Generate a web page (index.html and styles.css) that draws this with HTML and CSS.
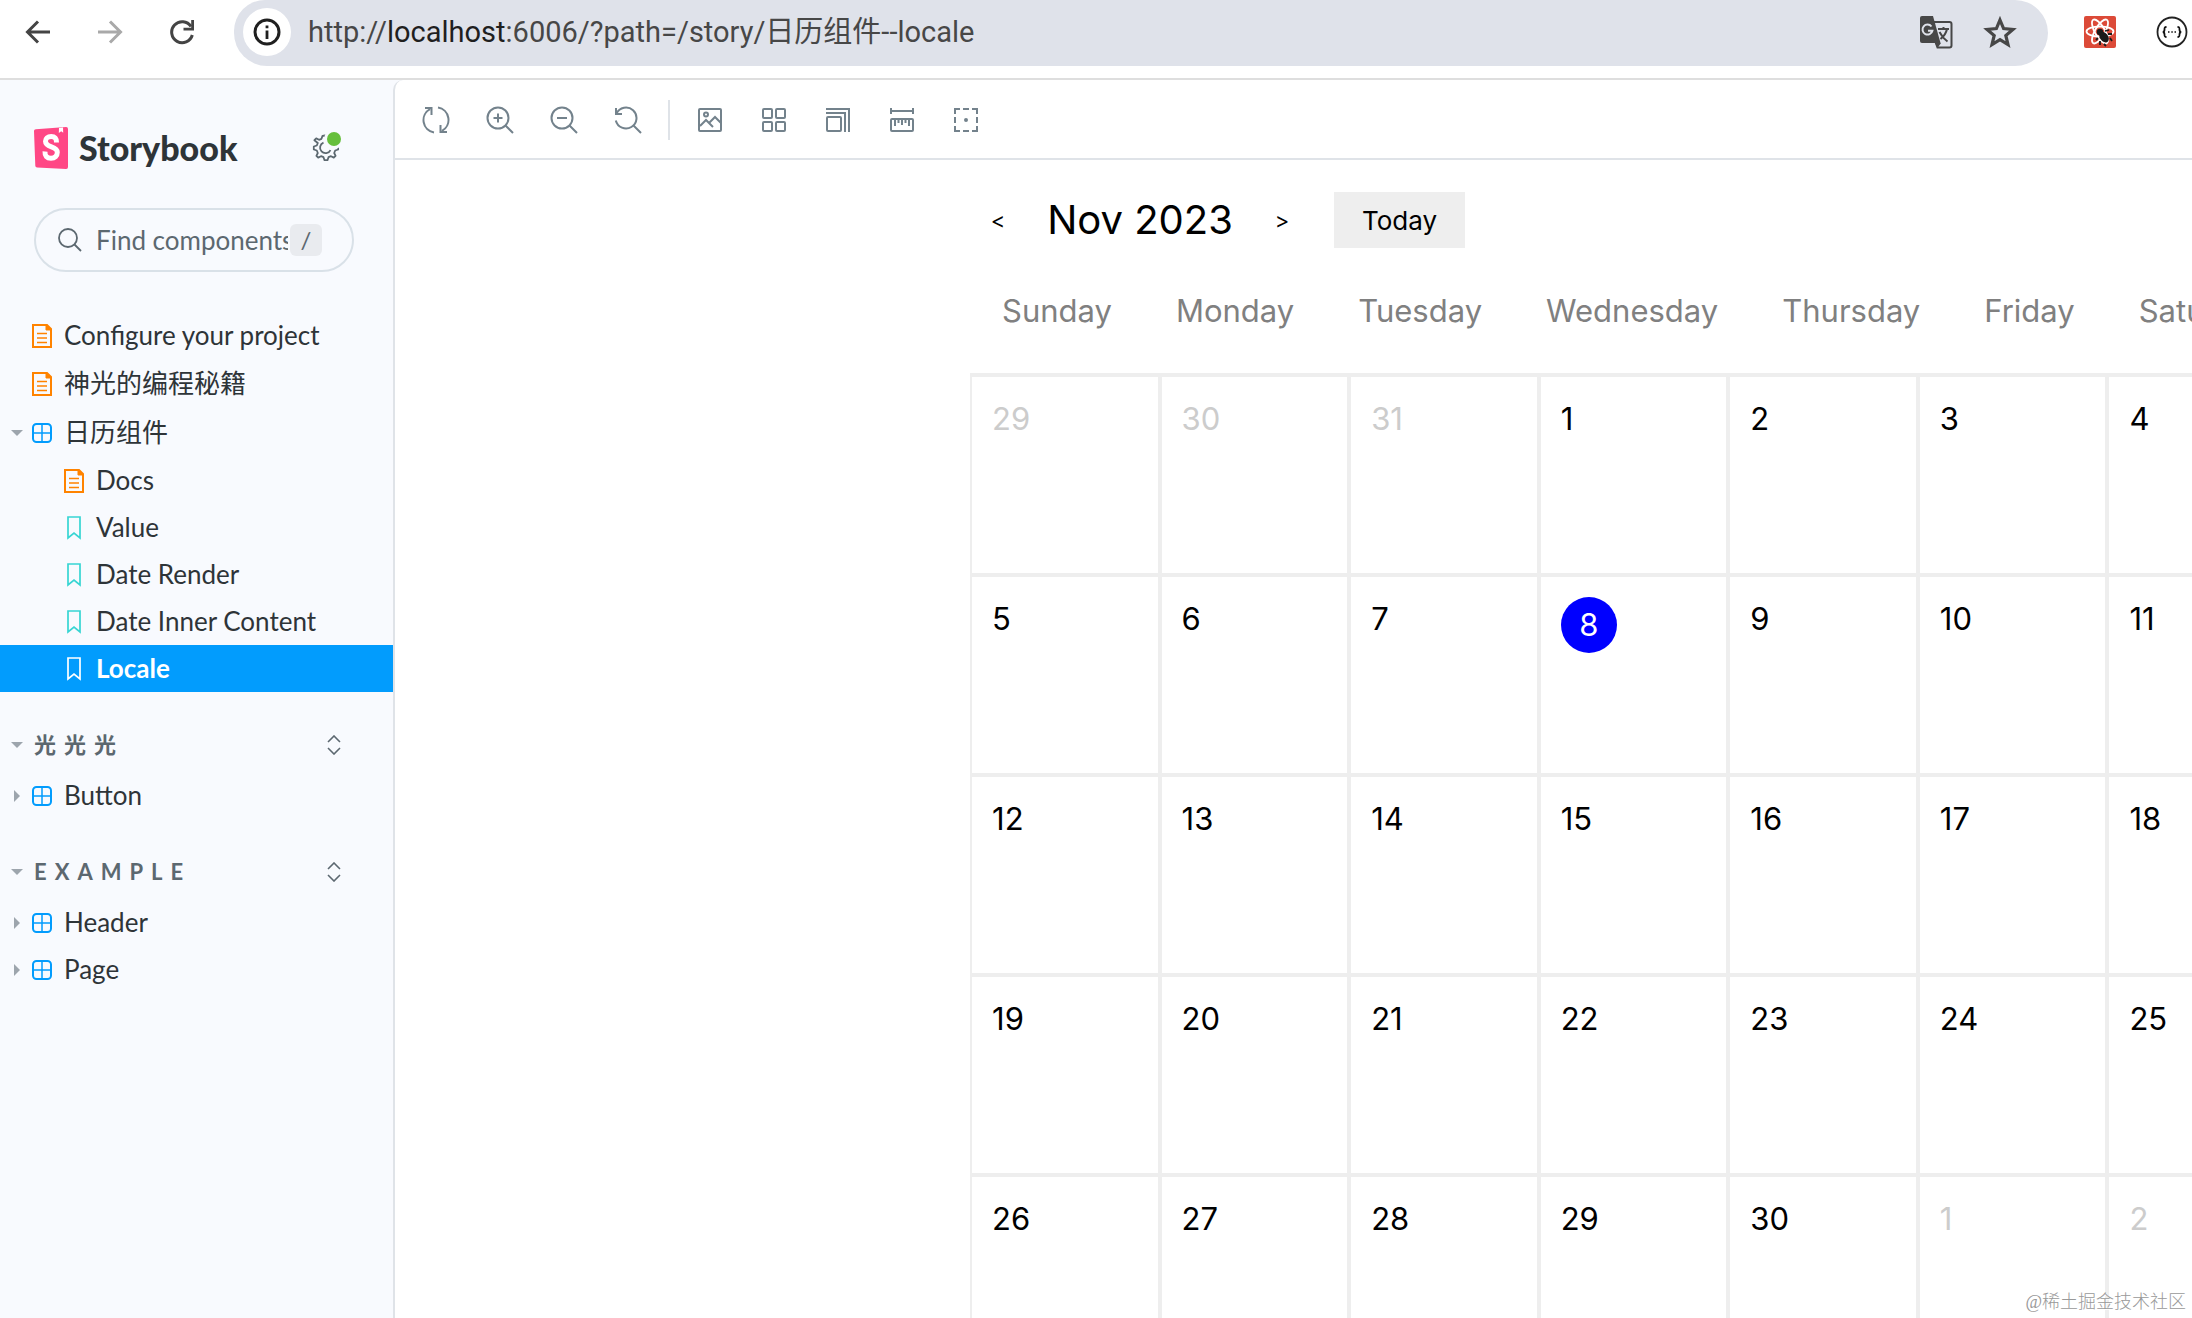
FILE: index.html
```html
<!DOCTYPE html>
<html lang="zh-CN">
<head>
<meta charset="utf-8">
<title>日历组件 - Locale ⋅ Storybook</title>
<link rel="stylesheet" href="styles.css">
</head>
<body>
<svg class="defs" aria-hidden="true">
  <symbol id="i-doc" viewBox="0 0 20 24"><path d="M1 1h14l4 4v18H1z" fill="none" stroke="currentColor" stroke-width="2"/><path d="M14 1v5h5z" fill="currentColor" stroke="currentColor"/><path d="M5 9.500h10M5 14h10M5 18.500h10" stroke="currentColor" stroke-width="1.500"/></symbol>
  <symbol id="i-comp" viewBox="0 0 20 20"><rect x="1" y="1" width="18" height="18" rx="3.500" fill="none" stroke="currentColor" stroke-width="2"/><path d="M10 1v18M1 10h18" stroke="currentColor" stroke-width="1.500"/></symbol>
  <symbol id="i-mark" viewBox="0 0 20 24"><path d="M4 1h12v21l-6-5-6 5z" fill="none" stroke="currentColor" stroke-width="1.700"/></symbol>
  <symbol id="i-down" viewBox="0 0 12 12"><path d="M0 3h12L6 9z" fill="currentColor"/></symbol>
  <symbol id="i-right" viewBox="0 0 12 12"><path d="M3 0v12l6-6z" fill="currentColor"/></symbol>
  <symbol id="i-expand" viewBox="0 0 14 20"><path d="M1 7l6-6 6 6M1 13l6 6 6-6" fill="none" stroke="currentColor" stroke-width="1.600"/></symbol>
</svg>

<header class="browser">
  <nav class="browser-nav" aria-label="Browser">
    <button type="button" aria-label="Back"><svg width="26" height="26" viewBox="0 0 26 26"><path d="M25 13H3M13 2.500L2.500 13 13 23.500" fill="none" stroke="#444" stroke-width="3"/></svg></button>
    <button type="button" aria-label="Forward"><svg width="26" height="26" viewBox="0 0 26 26"><path d="M1 13h22M13 2.500L23.500 13 13 23.500" fill="none" stroke="#a9a9a9" stroke-width="3"/></svg></button>
    <button type="button" aria-label="Reload"><svg width="26" height="26" viewBox="0 0 26 26"><path d="M22 7.500A10.500 10.500 0 1 0 23.300 16" fill="none" stroke="#444" stroke-width="3"/><path d="M25 1v10.500H14.500v-2.800h7.700V1z" fill="#444"/></svg></button>
  </nav>
  <div class="omnibox">
    <button type="button" class="site-info" aria-label="Site information"><svg width="28" height="28" viewBox="0 0 28 28"><circle cx="14" cy="14" r="12" fill="none" stroke="#1f1f1f" stroke-width="3"/><path d="M12.600 12.500h2.800V21h-2.800zM12.600 7.500h2.800v2.800h-2.800z" fill="#1f1f1f"/></svg></button>
    <div class="url" role="textbox" aria-label="Address">http://<span class="host">localhost</span>:6006/?path=/story/日历组件--locale</div>
    <button type="button" aria-label="Translate"><svg width="34" height="34" viewBox="0 0 34 34"><path d="M14 7h16.500a2 2 0 0 1 2 2v21.500a2 2 0 0 1-2 2H18.500L14 20z" fill="none" stroke="#474747" stroke-width="2"/><path d="M3 1h11l7.500 27H3a2 2 0 0 1-2-2V3a2 2 0 0 1 2-2z" fill="#474747"/><path d="M16 28h6l-3.500 5z" fill="#474747"/><path d="M12.500 11.500a5 5 0 1 0 .9 4.200H9" fill="none" stroke="#dfe2ea" stroke-width="2"/><path d="M19 14h11M24.500 12v2M28 14c-1 5-4 8-6.500 10M20.500 17c2 4 4.500 7 8 9.500" fill="none" stroke="#474747" stroke-width="2"/></svg></button>
    <button type="button" aria-label="Bookmark"><svg width="34" height="34" viewBox="0 0 34 34"><path d="M17 5l3.600 8.600 9.300.8-7.100 6.100 2.200 9.100-8-4.900-8 4.900 2.200-9.100-7.100-6.100 9.300-.8z" fill="none" stroke="#474747" stroke-width="3.200"/></svg></button>
  </div>
  <div class="extensions">
    <button type="button" aria-label="React Developer Tools"><svg width="32" height="32" viewBox="0 0 32 32"><rect width="32" height="32" rx="2" fill="#dc4a38"/><g fill="none" stroke="#fff" stroke-width="1.800"><ellipse cx="16" cy="15.500" rx="13.500" ry="5"/><ellipse cx="16" cy="15.500" rx="13.500" ry="5" transform="rotate(60 16 15.500)"/><ellipse cx="16" cy="15.500" rx="13.500" ry="5" transform="rotate(120 16 15.500)"/></g><g fill="#1b1b1b"><circle cx="16" cy="16" r="3.200"/><ellipse cx="20" cy="21" rx="4" ry="6" transform="rotate(-38 20 21)"/></g><path d="M14 22l-2 2M16 25l0 4M21 15l4-1M24 18l4 0M20 28l2 2M26 22l2 3" stroke="#1b1b1b" stroke-width="1.800"/></svg></button>
    <button type="button" aria-label="JSON formatter"><svg width="32" height="32" viewBox="0 0 32 32"><circle cx="16" cy="16" r="14.500" fill="#fff" stroke="#222" stroke-width="1.800"/><path d="M10.500 11c-2 0-2 .8-2 2.500s-.3 2.500-1.800 2.500c1.500 0 1.800.8 1.800 2.500s0 2.500 2 2.500M21.500 11c2 0 2 .8 2 2.500s.3 2.500 1.800 2.500c-1.500 0-1.800.8-1.800 2.500s0 2.500-2 2.500" fill="none" stroke="#111" stroke-width="1.800"/><path d="M12 16h1.500M15.300 16h1.500M18.500 16H20" stroke="#111" stroke-width="1.600"/></svg></button>
  </div>
</header>

<div class="app">
  <aside class="sidebar">
    <div class="brand">
      <a href="#" class="logo"><svg width="34" height="42" viewBox="0 0 34 42"><path d="M1.800 2.200L32 .1A1.900 1.900 0 0 1 34 2v38a1.900 1.900 0 0 1-2 1.900L3.100 40.600a1.900 1.900 0 0 1-1.800-1.800L0 4.200a1.900 1.900 0 0 1 1.800-2z" fill="#ff4785"/><path d="M25 .9l4-.3.200 5.200-2-1.500L24.800 6z" fill="#fff"/><path d="M22.500 15.500c.2-4-1.800-6-5.300-6-3.600 0-5.700 1.900-5.700 4.800 0 7 11.800 4.200 11.800 11 0 3.700-2.400 5.900-6.300 5.900-4.200 0-6.300-2.300-6-6.700" fill="none" stroke="#fff" stroke-width="5"/></svg><span>Storybook</span></a>
      <button type="button" class="settings" aria-label="Shortcuts"><svg width="28" height="28" viewBox="0 0 28 28"><path d="M14 1.500l2.500.3 1 3 2.500 1 2.800-1.400 1.800 1.800-1.400 2.800 1 2.500 3 1v3l-3 1-1 2.500 1.400 2.800-1.800 1.800-2.800-1.400-2.500 1-1 3h-3l-1-3-2.500-1-2.800 1.400-1.800-1.800 1.400-2.800-1-2.500-3-1v-3l3-1 1-2.500L3.400 6.200l1.800-1.800L8 5.800l2.500-1 1-3z" fill="none" stroke="#5c6870" stroke-width="1.800" stroke-linejoin="round"/><path d="M12.500 8.600a5.500 5.500 0 1 0 7 7.500" fill="none" stroke="#5c6870" stroke-width="1.800"/></svg><span class="dot"></span></button>
    </div>
    <label class="search">
      <svg width="24" height="24" viewBox="0 0 24 24"><circle cx="10" cy="10" r="9" fill="none" stroke="#5c6870" stroke-width="1.800"/><path d="M16.500 16.500l6.500 6.500" stroke="#5c6870" stroke-width="1.800"/></svg>
      <input type="text" placeholder="Find components" aria-label="Find components">
      <kbd>/</kbd>
    </label>
    <nav class="tree" aria-label="Stories">
      <a href="#" class="row"><i class="tw"></i><svg class="doc"><use href="#i-doc"/></svg><span>Configure your project</span></a>
      <a href="#" class="row cjk"><i class="tw"></i><svg class="doc"><use href="#i-doc"/></svg><span>神光的编程秘籍</span></a>
      <a href="#" class="row cjk"><svg class="tw"><use href="#i-down"/></svg><svg class="comp"><use href="#i-comp"/></svg><span>日历组件</span></a>
      <a href="#" class="row child"><svg class="doc"><use href="#i-doc"/></svg><span>Docs</span></a>
      <a href="#" class="row child"><svg class="mark"><use href="#i-mark"/></svg><span>Value</span></a>
      <a href="#" class="row child"><svg class="mark"><use href="#i-mark"/></svg><span>Date Render</span></a>
      <a href="#" class="row child"><svg class="mark"><use href="#i-mark"/></svg><span>Date Inner Content</span></a>
      <a href="#" class="row child selected"><svg class="mark"><use href="#i-mark"/></svg><span>Locale</span></a>
      <div class="group"><button type="button" class="group-name"><svg class="tw"><use href="#i-down"/></svg>光光光</button><button type="button" class="expand" aria-label="Expand"><svg width="14" height="20"><use href="#i-expand"/></svg></button></div>
      <a href="#" class="row"><svg class="tw"><use href="#i-right"/></svg><svg class="comp"><use href="#i-comp"/></svg><span>Button</span></a>
      <div class="group"><button type="button" class="group-name"><svg class="tw"><use href="#i-down"/></svg>EXAMPLE</button><button type="button" class="expand" aria-label="Expand"><svg width="14" height="20"><use href="#i-expand"/></svg></button></div>
      <a href="#" class="row"><svg class="tw"><use href="#i-right"/></svg><svg class="comp"><use href="#i-comp"/></svg><span>Header</span></a>
      <a href="#" class="row"><svg class="tw"><use href="#i-right"/></svg><svg class="comp"><use href="#i-comp"/></svg><span>Page</span></a>
    </nav>
  </aside>

  <main class="preview">
    <div class="toolbar">
      <button type="button" aria-label="Remount"><svg viewBox="0 0 28 28"><path d="M12 26.500A12.500 12.500 0 0 1 8 3.200M3 2h6.500v7M16 1.500A12.500 12.500 0 0 1 20 24.800M25 26h-6.500v-7"/></svg></button>
      <button type="button" aria-label="Zoom in"><svg viewBox="0 0 28 28"><circle cx="12" cy="12" r="10.500"/><path d="M19.500 19.500L27 27M12 7.500v9M7.500 12h9"/></svg></button>
      <button type="button" aria-label="Zoom out"><svg viewBox="0 0 28 28"><circle cx="12" cy="12" r="10.500"/><path d="M19.500 19.500L27 27M7 12h10"/></svg></button>
      <button type="button" aria-label="Reset zoom"><svg viewBox="0 0 28 28"><path d="M2 2v6h6M2.500 7.500A10.500 10.500 0 1 1 1.800 14.500M19.500 19.500L27 27"/></svg></button>
      <span class="sep"></span>
      <button type="button" aria-label="Background"><svg viewBox="0 0 28 28"><rect x="3" y="3" width="22" height="22" rx="1"/><circle cx="10" cy="8.500" r="2"/><path d="M4 20l6-6 7 7M13 17l6-6 6 6"/></svg></button>
      <button type="button" aria-label="Grid"><svg viewBox="0 0 28 28"><rect x="3" y="3" width="9" height="9" rx="1"/><rect x="16" y="3" width="9" height="9" rx="1"/><rect x="3" y="16" width="9" height="9" rx="1"/><rect x="16" y="16" width="9" height="9" rx="1"/></svg></button>
      <button type="button" aria-label="Viewport"><svg viewBox="0 0 28 28"><rect x="3" y="11" width="14" height="14" rx="1"/><path d="M2 7h19v19M2 3h23v23"/></svg></button>
      <button type="button" aria-label="Measure"><svg viewBox="0 0 28 28"><path d="M3 2v6M25 2v6M3 5h22M7 13v7M10.500 13v4M14 13v6M17.500 13v4M21 13v7"/><rect x="3" y="13" width="22" height="12" rx="1"/></svg></button>
      <button type="button" aria-label="Outline"><svg viewBox="0 0 28 28"><path d="M3 8V3h5M11 3h6M20 3h5v5M25 11v6M25 20v5h-5M17 25h-6M8 25H3v-5M3 17v-6"/><circle cx="14" cy="14" r="1"/></svg></button>
    </div>
    <div class="canvas">
      <section class="calendar">
        <div class="cal-head">
          <button type="button" class="step" aria-label="Previous month">&lt;</button>
          <h1>Nov 2023</h1>
          <button type="button" class="step" aria-label="Next month">&gt;</button>
          <button type="button" class="today">Today</button>
        </div>
        <div class="week"><span>Sunday</span><span>Monday</span><span>Tuesday</span><span>Wednesday</span><span>Thursday</span><span>Friday</span><span>Saturday</span></div>
        <table class="days">
          <tbody>
            <tr><td class="out">29</td><td class="out">30</td><td class="out">31</td><td>1</td><td>2</td><td>3</td><td>4</td></tr>
            <tr><td>5</td><td>6</td><td>7</td><td><span class="picked">8</span></td><td>9</td><td>10</td><td>11</td></tr>
            <tr><td>12</td><td>13</td><td>14</td><td>15</td><td>16</td><td>17</td><td>18</td></tr>
            <tr><td>19</td><td>20</td><td>21</td><td>22</td><td>23</td><td>24</td><td>25</td></tr>
            <tr><td>26</td><td>27</td><td>28</td><td>29</td><td>30</td><td class="out">1</td><td class="out">2</td></tr>
          </tbody>
        </table>
      </section>
    </div>
  </main>
</div>
<div class="watermark">@稀土掘金技术社区</div>
</body>
</html>
```
FILE: styles.css
```css
* { box-sizing: border-box; }
html, body { height: 100%; margin: 0; }
body {
  display: flex;
  flex-direction: column;
  overflow: hidden;
  background: #fff;
  font-family: Lato, "Noto Sans CJK SC", sans-serif;
  color: #2e3438;
}
button { padding: 0; border: 0; background: none; font: inherit; color: inherit; }
button svg { display: block; }
a { color: inherit; text-decoration: none; }
.defs { position: absolute; width: 0; height: 0; }

/* Browser bar */
.browser {
  display: flex;
  flex: none;
  align-items: flex-start;
  height: 80px;
  border-bottom: 2px solid #dedede;
}
.browser-nav { display: flex; gap: 46px; padding: 19px 39px 0 25px; }
.omnibox {
  display: flex;
  flex: 1;
  align-items: center;
  gap: 30px;
  height: 66px;
  padding: 0 31px 2px 9px;
  border-radius: 32px 34px 34px 34px;
  background: #dfe2ea;
}
.site-info {
  display: grid;
  place-items: center;
  width: 48px;
  height: 48px;
  border-radius: 50%;
  background: #fff;
}
.url {
  flex: 1;
  margin-left: -13px;
  font: 29px/40px Roboto, "Noto Sans CJK SC", sans-serif;
  color: #474747;
  white-space: nowrap;
}
.host { color: #1f1f1f; }
.extensions { display: flex; gap: 40px; padding: 16px 4px 0 36px; }

/* Sidebar */
.app { display: flex; flex: 1; min-height: 0; background: #f8fafe; }
.sidebar { flex: none; width: 393px; }
.brand {
  display: flex;
  align-items: center;
  justify-content: space-between;
  height: 42px;
  margin: 47px 54px 0 34px;
}
.logo {
  display: flex;
  align-items: center;
  gap: 11px;
  font-size: 34px;
  line-height: 42px;
  font-weight: 900;
}
.settings { position: relative; }
.dot {
  position: absolute;
  top: -2px;
  right: -2px;
  width: 14px;
  height: 14px;
  border-radius: 50%;
  background: #66bf3c;
  box-shadow: 0 0 0 3px #f8fafe;
}
.search {
  display: flex;
  align-items: center;
  height: 64px;
  margin: 39px 39px 39px 34px;
  padding: 0 30px 0 22px;
  border: 2px solid #d9e1e8;
  border-radius: 32px;
}
.search svg { flex: none; }
.search input {
  flex: 1;
  min-width: 0;
  margin-left: 14px;
  padding: 0;
  border: 0;
  background: none;
  font: inherit;
  font-size: 26px;
  line-height: 40px;
}
.search input::placeholder { color: #5c6870; opacity: 1; }
.search kbd {
  width: 32px;
  height: 32px;
  margin-left: 2px;
  border-radius: 6px;
  background: #e9ebef;
  color: #5c6870;
  font: 24px/32px Lato, sans-serif;
  text-align: center;
}
.row {
  display: flex;
  align-items: center;
  height: 47px;
  padding-left: 11px;
  font-size: 26px;
  line-height: 40px;
}
.row span { padding-bottom: 2px; }
.row.cjk { height: 49px; }
.row.child { padding-left: 64px; }
.tw { flex: none; width: 12px; height: 12px; margin-right: 9px; color: #9da5ad; }
.doc, .comp, .mark { flex: none; width: 20px; height: 24px; margin-right: 12px; }
.doc { color: #ff8300; }
.comp { height: 20px; color: #029cfd; }
.mark { color: #37d5d3; }
.selected { background: #029cfd; color: #fff; font-weight: 700; }
.selected .mark { color: #fff; }
.group {
  display: flex;
  align-items: center;
  justify-content: space-between;
  height: 54px;
  margin-top: 26px;
  padding: 0 52px 0 11px;
  color: #5c6870;
}
.group-name {
  display: flex;
  align-items: center;
  font-size: 22px;
  line-height: 32px;
  font-weight: 700;
  letter-spacing: 8px;
}
.group-name .tw { margin-right: 11px; }
.tree { padding-top: 1px; }

/* Preview */
.preview {
  display: flex;
  flex: 1;
  flex-direction: column;
  min-width: 0;
  border-left: 2px solid #dfe3e8;
  border-radius: 10px 0 0 0;
  background: #fff;
}
.toolbar {
  display: flex;
  flex: none;
  align-items: center;
  gap: 36px;
  height: 80px;
  padding: 2px 0 0 27px;
  border-bottom: 2px solid #dfe3e8;
}
.toolbar svg { width: 28px; height: 28px; fill: none; stroke: #73828c; stroke-width: 2; }
.sep { width: 2px; height: 40px; margin: 0 -10px; background: #dfe3e8; }
.canvas { flex: 1; overflow: hidden; }

/* Calendar */
.calendar {
  width: 1327px;
  margin-left: 32%;
  font-family: Inter, Arial, sans-serif;
  color: #000;
}
.cal-head { display: flex; align-items: center; height: 56px; margin-top: 32px; }
.step { width: 56px; font-size: 22px; line-height: 40px; }
.cal-head h1 { width: 228px; margin: 0; font-size: 40px; line-height: 56px; font-weight: 400; text-align: center; }
.today { width: 131px; height: 56px; margin-left: 24px; background: #eee; font-size: 26px; }
.week {
  display: flex;
  height: 127px;
  padding-top: 40px;
  border-bottom: 2px solid #eee;
  color: #808080;
  font-size: 31px;
  line-height: 46px;
}
.week span { padding: 0 32px; }
.days { width: 100%; table-layout: fixed; border-collapse: separate; border-spacing: 0; }
.days td {
  height: 200px;
  padding: 20px;
  border: 2px solid #eee;
  font-size: 31px;
  line-height: 44px;
  vertical-align: top;
}
.days .out { color: #ccc; }
.picked {
  display: block;
  width: 56px;
  border-radius: 50%;
  background: #00f;
  color: #fff;
  line-height: 56px;
  text-align: center;
}
.watermark {
  position: absolute;
  right: 6px;
  bottom: 4px;
  color: #999;
  font: 300 18px/24px "Liberation Serif", "Noto Sans CJK SC", serif;
  text-shadow: 1px 1px 0 #fff;
}
```
